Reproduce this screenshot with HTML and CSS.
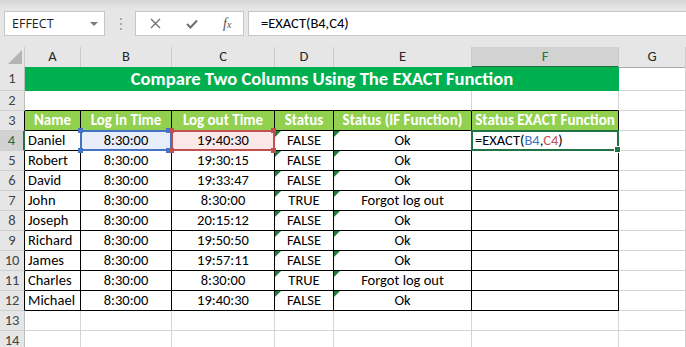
FILE: index.html
```html
<!DOCTYPE html>
<html lang="en">
<head>
    <meta charset="UTF-8">
    <title>EXACT Function</title>
    <link rel="stylesheet" href="styles.css">
</head>
<body>
    <!-- Formula bar -->
    <div class="toolbar">
        <div class="namebox">
            <span>EFFECT</span>
            <span class="caret"></span>
        </div>
        <div class="grip"></div>
        <div class="buttons">
            <svg width="11" height="11" viewBox="0 0 11 11"><path d="M1 1 L10 10 M10 1 L1 10" stroke="#6f6f6f" stroke-width="1.3" fill="none"/></svg>
            <svg width="12" height="10" viewBox="0 0 12 10"><path d="M1 5 L4.5 8.5 L11 1.5" stroke="#6f6f6f" stroke-width="2" fill="none"/></svg>
            <span class="fx">f<sub>x</sub></span>
        </div>
        <div class="formula">=EXACT(B4,C4)</div>
    </div>

    <!-- Sheet -->
    <div class="sheet">
        <div class="row head">
            <div class="corner"><svg width="14" height="14" viewBox="0 0 14 14"><polygon points="14,0 14,14 0,14" fill="#b4b4b4"/></svg></div>
            <div class="ch">A</div>
            <div class="ch">B</div>
            <div class="ch">C</div>
            <div class="ch">D</div>
            <div class="ch">E</div>
            <div class="ch active">F</div>
            <div class="ch">G</div>
        </div>

        <div class="row r1">
            <div class="rh">1</div>
            <div class="title">Compare Two Columns Using The EXACT Function</div>
            <div></div>
        </div>

        <div class="row">
            <div class="rh">2</div>
            <div class="blank"></div>
            <div class="blank"></div>
            <div class="blank"></div>
            <div class="blank"></div>
            <div class="top"></div>
            <div class="top"></div>
            <div></div>
        </div>

        <div class="row">
            <div class="rh edge">3</div>
            <div class="t hd">Name</div>
            <div class="t hd">Log in Time</div>
            <div class="t hd">Log out Time</div>
            <div class="t hd">Status</div>
            <div class="t hd">Status (IF Function)</div>
            <div class="t hd">Status EXACT Function</div>
            <div></div>
        </div>

        <div class="row">
            <div class="rh current">4</div>
            <div class="t l">Daniel</div>
            <div class="t ctr ref-b">8:30:00</div>
            <div class="t ctr ref-c">19:40:30</div>
            <div class="t ctr warn">FALSE</div>
            <div class="t ctr warn">Ok</div>
            <div class="t l cursor">=EXACT(<span class="blue">B4</span>,<span class="red">C4</span>)</div>
            <div></div>
        </div>

        <div class="row">
            <div class="rh edge">5</div>
            <div class="t l">Robert</div>
            <div class="t ctr">8:30:00</div>
            <div class="t ctr">19:30:15</div>
            <div class="t ctr warn">FALSE</div>
            <div class="t ctr warn">Ok</div>
            <div class="t"></div>
            <div></div>
        </div>

        <div class="row">
            <div class="rh edge">6</div>
            <div class="t l">David</div>
            <div class="t ctr">8:30:00</div>
            <div class="t ctr">19:33:47</div>
            <div class="t ctr warn">FALSE</div>
            <div class="t ctr warn">Ok</div>
            <div class="t"></div>
            <div></div>
        </div>

        <div class="row">
            <div class="rh edge">7</div>
            <div class="t l">John</div>
            <div class="t ctr">8:30:00</div>
            <div class="t ctr">8:30:00</div>
            <div class="t ctr warn">TRUE</div>
            <div class="t ctr warn">Forgot log out</div>
            <div class="t"></div>
            <div></div>
        </div>

        <div class="row">
            <div class="rh edge">8</div>
            <div class="t l">Joseph</div>
            <div class="t ctr">8:30:00</div>
            <div class="t ctr">20:15:12</div>
            <div class="t ctr warn">FALSE</div>
            <div class="t ctr warn">Ok</div>
            <div class="t"></div>
            <div></div>
        </div>

        <div class="row">
            <div class="rh edge">9</div>
            <div class="t l">Richard</div>
            <div class="t ctr">8:30:00</div>
            <div class="t ctr">19:50:50</div>
            <div class="t ctr warn">FALSE</div>
            <div class="t ctr warn">Ok</div>
            <div class="t"></div>
            <div></div>
        </div>

        <div class="row">
            <div class="rh edge">10</div>
            <div class="t l">James</div>
            <div class="t ctr">8:30:00</div>
            <div class="t ctr">19:57:11</div>
            <div class="t ctr warn">FALSE</div>
            <div class="t ctr warn">Ok</div>
            <div class="t"></div>
            <div></div>
        </div>

        <div class="row">
            <div class="rh edge">11</div>
            <div class="t l">Charles</div>
            <div class="t ctr">8:30:00</div>
            <div class="t ctr">8:30:00</div>
            <div class="t ctr warn">TRUE</div>
            <div class="t ctr warn">Forgot log out</div>
            <div class="t"></div>
            <div></div>
        </div>

        <div class="row">
            <div class="rh edge">12</div>
            <div class="t l">Michael</div>
            <div class="t ctr">8:30:00</div>
            <div class="t ctr">19:40:30</div>
            <div class="t ctr warn">FALSE</div>
            <div class="t ctr warn">Ok</div>
            <div class="t"></div>
            <div></div>
        </div>

        <div class="row">
            <div class="rh">13</div>
            <div></div><div></div><div></div><div></div><div></div><div></div><div></div>
        </div>

        <div class="row">
            <div class="rh">14</div>
            <div></div><div></div><div></div><div></div><div></div><div></div><div></div>
        </div>
    </div>
</body>
</html>
```

FILE: styles.css
```css
body {
    margin: 0;
    background-color: #fff;
    font-family: Carlito, Calibri, Lato, sans-serif;
    color: #000;
    overflow: hidden;
}

/* Formula bar */

.toolbar {
    height: 47px;
    box-sizing: border-box;
    padding-top: 11px;
    display: flex;
    align-items: flex-start;
    background: linear-gradient(#d6d6d6, #e6e6e6 9px);
    font-family: "Segoe UI", "Open Sans", sans-serif;
}

.namebox {
    margin-left: 4px;
    width: 101px;
    height: 25px;
    box-sizing: border-box;
    border: 1px solid #c6c6c6;
    background-color: #fff;
    display: flex;
    align-items: center;
    justify-content: space-between;
    padding: 0 6px 0 7px;
    font-size: 12.5px;
    color: #222;
}

.caret {
    width: 0;
    height: 0;
    border-left: 4px solid transparent;
    border-right: 4px solid transparent;
    border-top: 4px solid #7a7a7a;
}

.grip {
    margin: 7px 0 0 15px;
    width: 2px;
    height: 12px;
    background: repeating-linear-gradient(#a8a8a8 0 2px, transparent 2px 5px);
}

.buttons {
    margin-left: 13px;
    width: 109px;
    height: 25px;
    box-sizing: border-box;
    border: 1px solid #c6c6c6;
    background-color: #fff;
    display: flex;
    align-items: center;
    padding-left: 14px;
    gap: 25px;
}

.fx {
    font-family: "Liberation Serif", serif;
    font-style: italic;
    font-size: 14px;
    color: #555;
    line-height: 1;
}

.fx sub {
    font-size: 10px;
    vertical-align: 0;
}

.formula {
    margin-left: 4px;
    flex: 1;
    height: 25px;
    box-sizing: border-box;
    border: 1px solid #c6c6c6;
    border-right: none;
    background-color: #fff;
    padding-left: 12px;
    line-height: 23px;
    font-family: Carlito, Calibri, Lato, sans-serif;
    font-size: 14.5px;
}

/* Grid */

.row {
    display: grid;
    grid-template-columns: 25px 56px 91px 103px 59px 138px 147px 67px;
    height: 20px;
}

.row.r1 {
    grid-template-columns: 25px 594px 67px;
    height: 24px;
}

.row > div {
    position: relative;
    box-sizing: border-box;
    border-right: 1px solid #d4d4d4;
    border-bottom: 1px solid #d4d4d4;
    line-height: 19px;
    font-size: 14.5px;
    white-space: nowrap;
}

.head > div {
    background-color: #e6e6e6;
    border-right-color: #cbcbcb;
    border-bottom-color: #ababab;
    text-align: center;
    color: #262626;
}

.corner {
    display: flex;
    align-items: flex-end;
    justify-content: flex-end;
    padding: 0 2px 3px 0;
}

.corner svg {
    display: block;
}

.head .active {
    background-color: #d2d2d2;
    border-bottom: 2px solid #217346;
    color: #217346;
}

.row > .rh {
    background-color: #e6e6e6;
    border-right-color: #bdbdbd;
    border-bottom-color: #cfcfcf;
    text-align: center;
    color: #444;
}

.r1 .rh {
    line-height: 23px;
}

.row > .rh.edge {
    border-right-color: #000;
}

.row > .rh.current {
    background-color: #d2d2d2;
    border-right: 2px solid #217346;
    color: #217346;
}

.row > .title {
    background-color: #00b050;
    border: none;
    color: #fff;
    font-weight: bold;
    font-size: 18.6px;
    line-height: 24px;
    text-align: center;
}

.row > .blank {
    border-right: none;
    border-bottom-color: #000;
}

.row > .top {
    border-bottom-color: #000;
}

.row > .top + .top {
    border-bottom-color: #000;
}

.row > .t {
    border-right-color: #000;
    border-bottom-color: #000;
}

.row > .hd {
    background-color: #92d050;
    color: #fff;
    font-weight: bold;
    font-size: 15px;
    text-align: center;
}

.row > .l {
    padding-left: 3px;
}

.row > .ctr {
    text-align: center;
}

/* green error-check triangles */
.warn::before {
    content: "";
    position: absolute;
    left: 0;
    top: 0;
    border-top: 6px solid #1e7b3a;
    border-right: 6px solid transparent;
}

/* formula reference highlights */
.row > .ref-b {
    background-color: #e8eef9;
}

.row > .ref-c {
    background-color: #fae7e7;
}

.ref-b::after,
.ref-c::after {
    content: "";
    position: absolute;
    left: -1px;
    top: -1px;
    right: -1px;
    bottom: -1px;
    border: 2px solid #4472c4;
}

.ref-c::after {
    border-color: #c0504d;
}

.ref-b::before,
.ref-c::before {
    content: "";
    position: absolute;
    left: -3px;
    top: -3px;
    width: 5px;
    height: 5px;
    z-index: 1;
}

.ref-b::before {
    background-color: #4472c4;
    box-shadow: 88px 0 #4472c4, 0 20px #4472c4, 88px 20px #4472c4;
}

.ref-c::before {
    background-color: #c0504d;
    box-shadow: 102px 0 #c0504d, 0 20px #c0504d, 102px 20px #c0504d;
}

.blue {
    color: #4472c4;
}

.red {
    color: #c0504d;
}

.cursor::after {
    content: "";
    position: absolute;
    left: -1px;
    top: -1px;
    right: -1px;
    bottom: -1px;
    border: 2px solid #217346;
}

.cursor::before {
    content: "";
    position: absolute;
    right: -3px;
    bottom: -3px;
    width: 5px;
    height: 5px;
    background-color: #217346;
    border: 1px solid #fff;
    z-index: 1;
}
```
